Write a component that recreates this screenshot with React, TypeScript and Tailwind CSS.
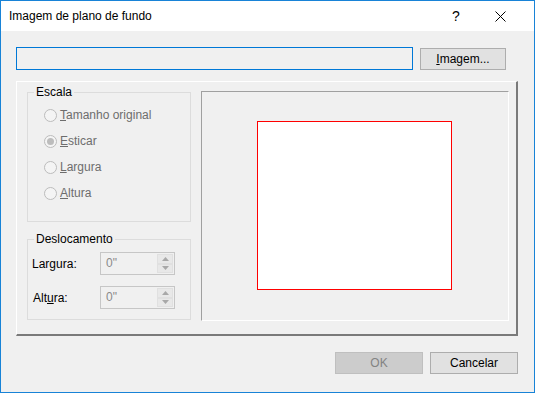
import React from "react";

const font = { fontFamily: '"Liberation Sans", Arial, sans-serif' };

function Radio({ label, checked }: { label: React.ReactNode; checked?: boolean }) {
  return (
    <div className="flex h-[26px] items-center">
      <span className="flex h-[13px] w-[13px] items-center justify-center rounded-full border border-[#bcbcbc] bg-[#f4f4f4]">
        {checked && <span className="h-[7px] w-[7px] rounded-full bg-[#bcbcbc]" />}
      </span>
      <span className="ml-[3px] text-[#6d6d6d]">{label}</span>
    </div>
  );
}

function Spin() {
  return (
    <div className="flex h-[23px] w-[75px] border border-[#c6c6c6] bg-[#f0f0f0]">
      <span className="flex-1 pl-[5px] leading-[21px] text-[#8a8a8a]">0"</span>
      <div className="flex w-[17px] flex-col py-[1px] pr-[1px]">
        <div className="flex h-[10px] items-center justify-center border border-[#e0e0e0] bg-[#e8e8e8]">
          <svg width="7" height="4" viewBox="0 0 7 4">
            <path d="M0 4 L3.5 0 L7 4 Z" fill="#a8a8a8" />
          </svg>
        </div>
        <div className="flex h-[10px] items-center justify-center border border-[#e0e0e0] bg-[#e8e8e8]">
          <svg width="7" height="4" viewBox="0 0 7 4">
            <path d="M0 0 L7 0 L3.5 4 Z" fill="#a8a8a8" />
          </svg>
        </div>
      </div>
    </div>
  );
}

export default function App() {
  return (
    <div
      className="flex h-[393px] w-[535px] flex-col border border-[#1883d7] text-[12px] text-black"
      style={font}
    >
      {/* title bar */}
      <div className="flex h-[30px] items-center bg-white">
        <span className="pl-[8px] leading-[30px]">Imagem de plano de fundo</span>
        <div className="ml-auto flex h-full pr-[12px]">
          <div className="flex w-[44px] items-center justify-center text-[14px]">?</div>
          <div className="flex w-[44px] items-center justify-center">
            <svg width="11" height="11" viewBox="0 0 11 11">
              <path d="M0.5 0.5 L10.5 10.5 M10.5 0.5 L0.5 10.5" stroke="#000" strokeWidth="1" />
            </svg>
          </div>
        </div>
      </div>

      {/* body */}
      <div className="flex flex-1 flex-col bg-[#f0f0f0] px-[15px] pt-[16px]">
        <div className="flex items-start">
          <div className="h-[23px] w-[397px] border border-[#0078d7] bg-[#f0f0f0]" />
          <button className="ml-[7px] mt-[1px] h-[22px] w-[86px] border border-[#adadad] bg-[#e1e1e1] leading-[20px]">
            <u>I</u>magem...
          </button>
        </div>

        <div className="mt-[11px] flex h-[255px] w-[502px] border-b-2 border-l border-r-2 border-t border-b-[#7a7a7a] border-l-white border-r-[#7a7a7a] border-t-white pl-[10px]">
          <div className="flex w-[164px] flex-col">
            <fieldset className="mt-[3px] h-[137px] border border-[#dcdcdc] p-0">
              <legend className="ml-[6px] px-[2px] leading-[14px]">Escala</legend>
              <div className="pl-[16px] pt-[3px]">
                <Radio label={<><u>T</u>amanho original</>} />
                <Radio label={<><u>E</u>sticar</>} checked />
                <Radio label={<><u>L</u>argura</>} />
                <Radio label={<><u>A</u>ltura</>} />
              </div>
            </fieldset>
            <fieldset className="mt-[10px] h-[88px] border border-[#dcdcdc] p-0">
              <legend className="ml-[6px] px-[2px] leading-[14px]">Deslocamento</legend>
              <div className="flex flex-col gap-[11px] pl-[4px] pt-[6px]">
                <div className="flex items-center">
                  <span className="w-[68px]">
                    Lar<u>g</u>ura:
                  </span>
                  <Spin />
                </div>
                <div className="flex items-center">
                  <span className="w-[68px] pl-[1px]">
                    Alt<u>u</u>ra:
                  </span>
                  <Spin />
                </div>
              </div>
            </fieldset>
          </div>

          {/* preview */}
          <div className="ml-[10px] mt-[9px] h-[230px] w-[308px] border-b border-l border-r border-t border-b-white border-l-[#a0a0a0] border-r-white border-t-[#a0a0a0] pl-[55px] pt-[29px]">
            <div className="h-[169px] w-[195px] border border-[#ff0000] bg-white" />
          </div>
        </div>

        <div className="mt-[16px] flex w-[502px] justify-end gap-[7px]">
          <button className="h-[22px] w-[88px] border border-[#bfbfbf] bg-[#cccccc] leading-[20px] text-[#838383]">
            OK
          </button>
          <button className="h-[22px] w-[88px] border border-[#adadad] bg-[#e1e1e1] leading-[20px]">
            Cancelar
          </button>
        </div>
      </div>
    </div>
  );
}
